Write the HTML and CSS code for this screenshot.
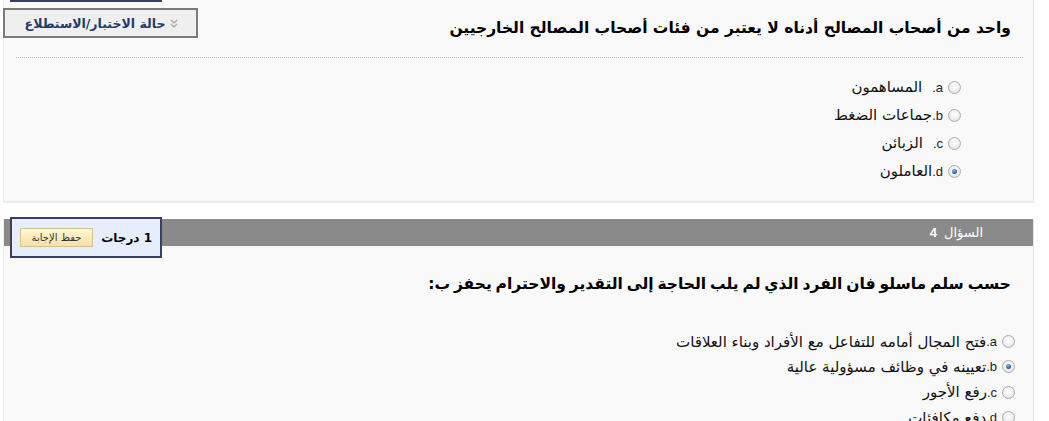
FILE: index.html
```html
<!DOCTYPE html>
<html lang="ar">
<head>
<meta charset="utf-8">
<title>اختبار</title>
<link rel="stylesheet" href="styles.css">
</head>
<body>
<div class="page">
  <section class="panel panel-first">
    <div class="prev-grade-edge"></div>
    <div class="q-head">
      <h2 class="q-title">واحد من أصحاب المصالح أدناه لا يعتبر من فئات أصحاب المصالح الخارجيين</h2>
      <button class="status-btn" type="button">
        <svg class="chev" width="8" height="9" viewBox="0 0 8 9"><path d="M1 1 L4 4 L7 1 M1 5 L4 8 L7 5" fill="none" stroke="#a9a9a9" stroke-width="1.4"/></svg>
        <span>حالة الاختبار/الاستطلاع</span>
      </button>
    </div>
    <div class="divider"></div>
    <ul class="options opts-first">
      <li><span class="radio"></span><span class="num">a.</span><span class="txt gap">المساهمون</span></li>
      <li><span class="radio"></span><span class="num">b.</span><span class="txt">جماعات الضغط</span></li>
      <li><span class="radio"></span><span class="num">c.</span><span class="txt gap">الزبائن</span></li>
      <li><span class="radio checked"></span><span class="num">d.</span><span class="txt">العاملون</span></li>
    </ul>
  </section>

  <section class="panel panel-second">
    <div class="q-bar"><span class="q-label">السؤال</span><span class="q-num">4</span></div>
    <div class="grade-box">
      <span class="points">1 درجات</span>
      <button class="save-btn" type="button">حفظ الإجابة</button>
    </div>
    <h2 class="q-title q-title-second">حسب سلم ماسلو فان الفرد الذي لم يلب الحاجة إلى التقدير والاحترام يحفز ب:</h2>
    <ul class="options opts-second">
      <li><span class="radio"></span><span class="num">a.</span><span class="txt">فتح المجال أمامه للتفاعل مع الأفراد وبناء العلاقات</span></li>
      <li><span class="radio checked"></span><span class="num">b.</span><span class="txt">تعيينه في وظائف مسؤولية عالية</span></li>
      <li><span class="radio"></span><span class="num">c.</span><span class="txt">رفع الأجور</span></li>
      <li><span class="radio"></span><span class="num">d.</span><span class="txt">دفع مكافئات</span></li>
    </ul>
  </section>
</div>
</body>
</html>
```

FILE: styles.css
```css
* { box-sizing: border-box; }

html, body {
  margin: 0;
  padding: 0;
  background: #ffffff;
  overflow: hidden;
}

body {
  font-family: "DejaVu Sans", "Liberation Sans", sans-serif;
  color: #000;
}

.page {
  direction: rtl;
  padding: 0 15px 0 3px;
  height: 421px;
}

.panel {
  position: relative;
  background: #f9f9f9;
  border-left: 1px solid #ececec;
  border-right: 1px solid #e6e6e6;
}

.panel-first {
  border-bottom: 2px solid #ebebeb;
  padding-bottom: 16px;
}

.prev-grade-edge {
  position: absolute;
  top: 0;
  left: 6px;
  width: 152px;
  height: 2px;
  background: #3b3f5e;
}

.q-head {
  display: flex;
  align-items: flex-start;
  padding-top: 8px;
}

.q-title {
  margin: 0;
  font-size: 15.5px;
  font-weight: bold;
  line-height: 24px;
  padding-top: 8px;
  padding-right: 22px;
  white-space: nowrap;
  color: #000;
}

.status-btn {
  margin-right: auto;
  margin-left: -1px;
  width: 195px;
  height: 30px;
  display: flex;
  align-items: center;
  justify-content: center;
  gap: 5px;
  background: #efefef;
  border: 2px solid #7b7b7b;
  padding: 0 0 0 2px;
  font-family: "DejaVu Sans", sans-serif;
  font-size: 12.5px;
  font-weight: bold;
  color: #233b6b;
  direction: rtl;
}

.chev { display: block; }

.divider {
  margin: 17px 10px 0 12px;
  border-top: 1px dotted #bdbdbd;
}

.options {
  list-style: none;
  margin: 0;
  padding: 0;
}

.options li {
  display: flex;
  align-items: center;
  font-size: 15px;
  color: #111;
}

.opts-first {
  margin-top: 15px;
  padding-right: 72px;
}
.opts-first li { height: 28px; }

.opts-second {
  margin-top: 33px;
  padding-right: 18px;
}
.opts-second li { height: 25.3px; }

.radio {
  width: 13px;
  height: 13px;
  border-radius: 50%;
  border: 1px solid #adadad;
  background: radial-gradient(circle at 50% 40%, #ffffff 0%, #f2f2f2 45%, #d8d8d8 100%);
  flex: none;
  position: relative;
}

.radio.checked::after {
  content: "";
  position: absolute;
  left: 3px;
  top: 3px;
  width: 5px;
  height: 5px;
  border-radius: 50%;
  background: radial-gradient(circle at 40% 35%, #8fb6e6 0%, #2e63a8 60%, #1b3f78 100%);
}

.num {
  margin-right: 5px;
  font-family: "Liberation Sans", sans-serif;
  font-size: 13px;
  color: #222;
}

.txt.gap { margin-right: 10px; }

.panel-second {
  margin-top: 16px;
  height: 210px;
}

.q-bar {
  height: 27px;
  background: #8a8a8a;
  color: #fff;
  display: flex;
  align-items: center;
  gap: 7px;
  padding-right: 50px;
  font-size: 13px;
}

.q-num {
  font-family: "Liberation Sans", sans-serif;
  font-weight: bold;
  font-size: 13px;
}

.grade-box {
  position: absolute;
  top: -2px;
  left: 6px;
  width: 152px;
  height: 41px;
  background: #e7eefb;
  border: 2px solid #3b3f5e;
  display: flex;
  align-items: center;
  justify-content: space-between;
  padding: 0 8px 0 8px;
}

.points {
  font-size: 12px;
  font-weight: bold;
  color: #000;
}

.save-btn {
  width: 73px;
  height: 19px;
  padding: 0;
  border: 1px solid #d5c28a;
  background: linear-gradient(#fff6d4, #f6e2a6);
  font-family: "DejaVu Sans", sans-serif;
  font-size: 10px;
  color: #333;
}

.q-title-second {
  padding-top: 26px;
  word-spacing: -1.5px;
}
```
